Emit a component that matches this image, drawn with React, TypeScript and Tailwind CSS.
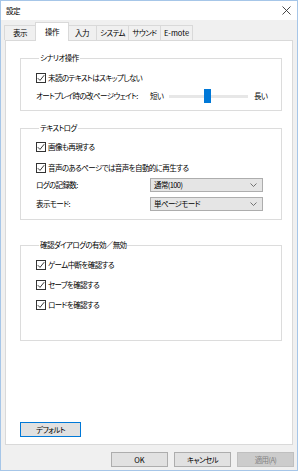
import React from "react";

const font = "font-['Noto_Sans_CJK_JP','Noto_Sans',sans-serif] [font-feature-settings:'palt'] tracking-[-0.6px]";

function Check() {
  return (
    <span className="w-[10px] h-[10px] border border-[#333333] bg-white flex items-center justify-center shrink-0">
      <svg width="8" height="8" viewBox="0 0 8 8">
        <path d="M0.8 4.2 L3 6.4 L7.2 1.2" fill="none" stroke="#222" strokeWidth="0.9" />
      </svg>
    </span>
  );
}

function CheckRow({ label, className = "" }: { label: string; className?: string }) {
  return (
    <div className={`flex items-center gap-[2px] h-[12px] ${className}`}>
      <Check />
      <span className="leading-[12px] whitespace-nowrap">{label}</span>
    </div>
  );
}

function Select({ value, className = "" }: { value: string; className?: string }) {
  return (
    <div className={`w-[113px] h-[14px] border border-[#adadad] bg-[#e5e5e5] flex items-center justify-between pl-[3px] pr-[5px] ${className}`}>
      <span className="leading-[12px] whitespace-nowrap">{value}</span>
      <svg width="7" height="4" viewBox="0 0 7 4">
        <path d="M0.5 0.5 L3.5 3.5 L6.5 0.5" fill="none" stroke="#555" strokeWidth="0.8" />
      </svg>
    </div>
  );
}

function Group({ title, className = "", children }: { title: string; className?: string; children: React.ReactNode }) {
  return (
    <fieldset className={`border border-[#dcdcdc] ml-[14px] mr-[10px] pl-[15px] ${className}`}>
      <legend className="ml-[3px] px-[1px] leading-[12px] whitespace-nowrap">{title}</legend>
      {children}
    </fieldset>
  );
}

export default function App() {
  const tabs = [
    { t: "表示", w: "w-[32px]" },
    { t: "操作", w: "w-[34px]", sel: true },
    { t: "入力", w: "w-[30px]" },
    { t: "システム", w: "w-[33px]" },
    { t: "サウンド", w: "w-[33px]" },
    { t: "E-mote", w: "w-[33px]", latin: true },
  ];
  return (
    <div className={`w-[298px] h-[471px] border border-[#a6c6e8] bg-[#f0f0f0] flex flex-col text-[7.5px] text-black ${font}`}>
      <div className="h-[19px] bg-white flex items-center justify-between pl-[5px] pr-[6px]">
        <span className="leading-[12px]">設定</span>
        <svg width="9" height="9" viewBox="0 0 9 9">
          <path d="M0.5 0.5 L8.5 8.5 M8.5 0.5 L0.5 8.5" stroke="#333" strokeWidth="0.9" />
        </svg>
      </div>
      <div className="h-[20px] flex items-end pl-[3px]">
        {tabs.map((tab) =>
          tab.sel ? (
            <div
              key={tab.t}
              className={`relative z-10 h-[19px] -mb-[1px] -mx-[1px] ${tab.w} bg-white border border-b-0 border-[#d9d9d9] flex items-start justify-center pt-[3px] leading-[12px] whitespace-nowrap`}
            >
              {tab.t}
            </div>
          ) : (
            <div
              key={tab.t}
              className={`h-[15px] ${tab.w} ${tab.latin ? "tracking-normal" : ""} bg-[#f0f0f0] border border-b-0 border-[#d9d9d9] -ml-[1px] first:ml-0 flex items-center justify-center leading-[12px] whitespace-nowrap`}
            >
              {tab.t}
            </div>
          )
        )}
      </div>
      <div className="h-[405px] ml-[4px] w-[288px] bg-white border border-[#d9d9d9] flex flex-col pt-[11px]">
        <Group title="シナリオ操作" className="h-[59px] pt-[8px]">
          <CheckRow label="未読のテキストはスキップしない" />
          <div className="flex items-center h-[14px] mt-[5px]">
            <span className="w-[114px] leading-[12px] whitespace-nowrap">オートプレイ時の改ページウェイト:</span>
            <span className="w-[19px] leading-[12px] whitespace-nowrap">短い</span>
            <div className="relative w-[79px] h-[14px] flex items-center">
              <div className="w-full h-[3px] bg-[#e7e7e7]" />
              <div className="absolute left-[35px] top-0 w-[7px] h-[14px] bg-[#0078d7]" />
            </div>
            <span className="ml-[6px] leading-[12px] whitespace-nowrap">長い</span>
          </div>
        </Group>
        <Group title="テキストログ" className="h-[98px] mt-[11px] pt-[7px]">
          <CheckRow label="画像も再現する" />
          <CheckRow label="音声のあるページでは音声を自動的に再生する" className="mt-[9px]" />
          <div className="flex items-center mt-[4px]">
            <span className="w-[114px] leading-[12px] whitespace-nowrap">ログの記録数:</span>
            <Select value="通常(100)" />
          </div>
          <div className="flex items-center mt-[5px]">
            <span className="w-[114px] leading-[12px] whitespace-nowrap">表示モード:</span>
            <Select value="単ページモード" />
          </div>
        </Group>
        <Group title="確認ダイアログの有効／無効" className="h-[102px] mt-[19px] pt-[8px]">
          <CheckRow label="ゲーム中断を確認する" />
          <CheckRow label="セーブを確認する" className="mt-[8px]" />
          <CheckRow label="ロードを確認する" className="mt-[8px]" />
        </Group>
        <div className="flex-1" />
        <div className="ml-[14px] mb-[7px] w-[61px] h-[15px] border border-[#0078d7] bg-[#e1e1e1] flex items-center justify-center leading-[12px]">
          デフォルト
        </div>
      </div>
      <div className="flex justify-end gap-[6px] pr-[3px] mt-[7px]">
        <div className="w-[57px] h-[15px] border border-[#adadad] bg-[#e1e1e1] flex items-center justify-center leading-[12px] tracking-normal">OK</div>
        <div className="w-[57px] h-[15px] border border-[#adadad] bg-[#e1e1e1] flex items-center justify-center leading-[12px]">キャンセル</div>
        <div className="w-[57px] h-[15px] border border-[#bfbfbf] bg-[#cccccc] text-[#838383] flex items-center justify-center leading-[12px]">適用(A)</div>
      </div>
    </div>
  );
}
